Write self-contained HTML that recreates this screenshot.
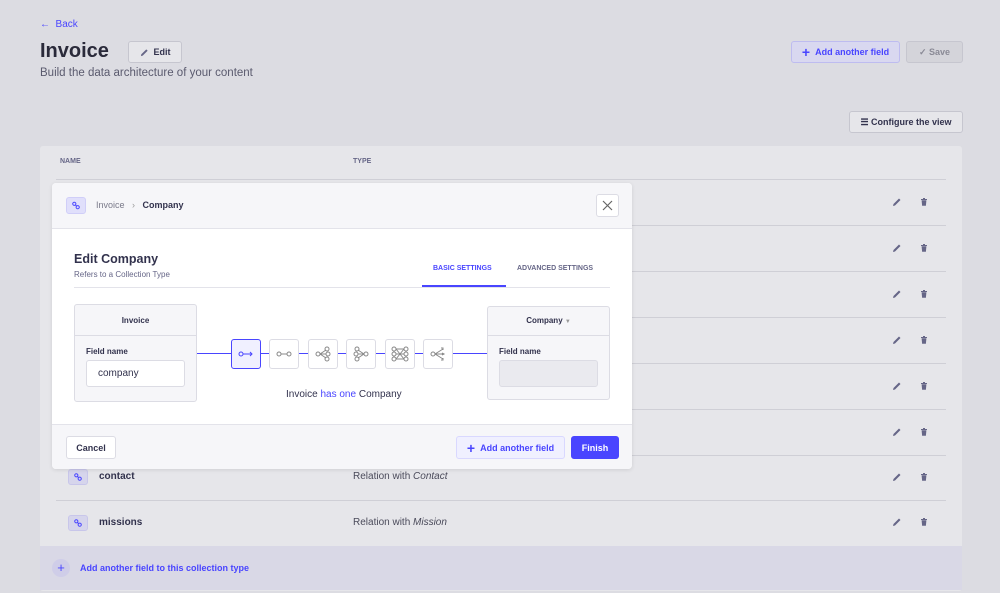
<!DOCTYPE html>
<html><head><style>
*{box-sizing:border-box;margin:0;padding:0}
body{width:1000px;height:593px;overflow:hidden;background:#dcdce2;font-family:"Liberation Sans",sans-serif;color:#32324d;position:relative}
.a{position:absolute}
.btn{position:absolute;border:1px solid #c6c6cf;border-radius:3px;font-size:9px;font-weight:bold;display:flex;align-items:center;justify-content:center;gap:5px}
.row{position:absolute;left:56px;width:890px;height:46px;border-bottom:1px solid #cfcfd6}
.ico{position:absolute;left:12px;width:20px;height:16px;background:#d6d5ec;border:1px solid #c8c6ea;border-radius:3px}
.nm{position:absolute;left:43px;font-size:10px;font-weight:bold}
.ty{position:absolute;left:297px;font-size:10px;color:#4a4a5a}
.ed{position:absolute;left:836px;top:17px}
.tr{position:absolute;left:863px;top:17px}
.rb{position:absolute;width:30px;height:30px;border:1px solid #dcdce4;border-radius:3px;background:#fff;top:339px;display:flex;align-items:center;justify-content:center}
</style></head><body>
<svg width="0" height="0" style="position:absolute"><defs>
<symbol id="pen" viewBox="0 0 10 10"><path d="M1 9 L1.5 7 L7 1.5 L8.5 3 L3 8.5 Z" fill="#666687"/></symbol>
<symbol id="bin" viewBox="0 0 10 10"><path d="M2 2.5h6M4 1.5h2" stroke="#666687" stroke-width="1"/><path d="M2.6 3.3h4.8l-.5 5.5H3.1z" fill="#666687"/></symbol>
<symbol id="lnk" viewBox="0 0 10 10"><circle cx="3.3" cy="3.3" r="1.6" fill="none" stroke="#4945ff" stroke-width="1"/><circle cx="6.7" cy="6.7" r="1.6" fill="none" stroke="#4945ff" stroke-width="1"/><path d="M4.3 4.3l1.4 1.4" stroke="#4945ff"/></symbol>
</defs></svg>
<div class="a" style="left:40px;top:19px;font-size:10px;color:#4945ff">← &nbsp;Back</div>
<div class="a" style="left:40px;top:40px;font-size:20px;font-weight:bold;color:#2a2a3a">Invoice</div>
<div class="btn" style="left:128px;top:41px;width:54px;height:22px;background:#e6e6ea"><svg width="9" height="9"><use href="#pen"/></svg>Edit</div>
<div class="a" style="left:40px;top:67px;font-size:11.5px;color:#5a5a6e">Build the data architecture of your content</div>
<div class="btn" style="left:791px;top:41px;width:109px;height:22px;background:#d9d8f0;border-color:#bebcf0;color:#4945ff"><span style="font-size:14px">+</span>Add another field</div>
<div class="btn" style="left:906px;top:41px;width:57px;height:22px;background:#d4d4da;color:#8a8a96">✓ Save</div>
<div class="btn" style="left:849px;top:111px;width:114px;height:22px;background:#e6e6ea">☰ Configure the view</div>
<div class="a" style="left:40px;top:146px;width:922px;height:445px;background:#e6e6ea;border-radius:3px"></div>
<div class="a" style="left:60px;top:158px;font-size:7px;font-weight:bold;color:#666687">NAME</div>
<div class="a" style="left:353px;top:158px;font-size:7px;font-weight:bold;color:#666687">TYPE</div>
<div class="a" style="left:56px;top:179px;width:890px;height:1px;background:#cfcfd6"></div>
<div class="row" style="top:180px"><svg class="ed" width="10" height="10"><use href="#pen"/></svg><svg class="tr" width="10" height="10"><use href="#bin"/></svg></div>
<div class="row" style="top:226px"><svg class="ed" width="10" height="10"><use href="#pen"/></svg><svg class="tr" width="10" height="10"><use href="#bin"/></svg></div>
<div class="row" style="top:272px"><svg class="ed" width="10" height="10"><use href="#pen"/></svg><svg class="tr" width="10" height="10"><use href="#bin"/></svg></div>
<div class="row" style="top:318px"><svg class="ed" width="10" height="10"><use href="#pen"/></svg><svg class="tr" width="10" height="10"><use href="#bin"/></svg></div>
<div class="row" style="top:364px"><svg class="ed" width="10" height="10"><use href="#pen"/></svg><svg class="tr" width="10" height="10"><use href="#bin"/></svg></div>
<div class="row" style="top:410px"><svg class="ed" width="10" height="10"><use href="#pen"/></svg><svg class="tr" width="10" height="10"><use href="#bin"/></svg></div>
<div class="row" style="top:455px"><div class="ico" style="top:14px"><svg width="18" height="14" viewBox="-4 -2 18 14"><use href="#lnk" width="10" height="10"/></svg></div><span class="nm" style="top:16px">contact</span><span class="ty" style="top:16px">Relation with <i>Contact</i></span><svg class="ed" width="10" height="10"><use href="#pen"/></svg><svg class="tr" width="10" height="10"><use href="#bin"/></svg></div>
<div class="row" style="top:500px;border:none"><div class="ico" style="top:15px"><svg width="18" height="14" viewBox="-4 -2 18 14"><use href="#lnk" width="10" height="10"/></svg></div><span class="nm" style="top:17px">missions</span><span class="ty" style="top:17px">Relation with <i>Mission</i></span><svg class="ed" width="10" height="10"><use href="#pen"/></svg><svg class="tr" width="10" height="10"><use href="#bin"/></svg></div>
<div class="a" style="left:40px;top:546px;width:922px;height:44px;background:#d9d8e6"></div>
<div class="a" style="left:52px;top:559px;width:18px;height:18px;border-radius:50%;background:#cfcde8;color:#4945ff;font-size:13px;text-align:center;line-height:18px">+</div>
<div class="a" style="left:80px;top:563px;font-size:9px;font-weight:bold;color:#4945ff">Add another field to this collection type</div>

<div class="a" style="left:52px;top:183px;width:580px;height:286px;background:#fff;border-radius:4px;box-shadow:0 1px 4px rgba(0,0,0,.1);overflow:hidden">
 <div class="a" style="left:0;top:0;width:580px;height:46px;background:#f6f6f9;border-bottom:1px solid #e3e3ea"></div>
 <div class="a" style="left:14px;top:14px;width:20px;height:17px;background:#e0dffb;border:1px solid #d0cef8;border-radius:3px"><svg width="18" height="15" viewBox="-4 -2.5 18 15"><use href="#lnk" width="10" height="10"/></svg></div>
 <div class="a" style="left:44px;top:17px;font-size:9px;color:#7a7a8a">Invoice &nbsp;&nbsp;<span style="color:#999">›</span>&nbsp;&nbsp; <b style="color:#32324d">Company</b></div>
 <div class="a" style="left:544px;top:11px;width:23px;height:23px;border:1px solid #dcdce4;border-radius:3px;background:#fff"><svg width="21" height="21"><path d="M6 6l9 9M15 6l-9 9" stroke="#666" stroke-width="1.2"/></svg></div>
 <div class="a" style="left:22px;top:69px;font-size:12.5px;font-weight:bold">Edit Company</div>
 <div class="a" style="left:22px;top:87px;font-size:8px;color:#666687">Refers to a Collection Type</div>
 <div class="a" style="left:381px;top:82px;font-size:7px;font-weight:bold;color:#4945ff">BASIC SETTINGS</div>
 <div class="a" style="left:465px;top:82px;font-size:7px;font-weight:bold;color:#666687">ADVANCED SETTINGS</div>
 <div class="a" style="left:22px;top:104px;width:536px;height:1px;background:#e3e3ea"></div>
 <div class="a" style="left:370px;top:102px;width:84px;height:2px;background:#4945ff"></div>
 <div class="a" style="left:145px;top:170px;width:290px;height:1px;background:#4945ff"></div>
 <div class="a" style="left:22px;top:121px;width:123px;height:98px;border:1px solid #dcdce4;border-radius:3px;background:#f6f6f9">
  <div style="height:31px;border-bottom:1px solid #dcdce4;text-align:center;line-height:31px;font-size:8px;font-weight:bold">Invoice</div>
  <div style="font-size:8px;font-weight:bold;margin:11px 0 0 11px">Field name</div>
  <div style="margin:4px 0 0 11px;width:99px;height:27px;border:1px solid #dcdce4;border-radius:3px;background:#fff;font-size:10px;line-height:25px;padding-left:11px">company</div>
 </div>
 <div class="a" style="left:435px;top:123px;width:123px;height:94px;border:1px solid #dcdce4;border-radius:3px;background:#f6f6f9">
  <div style="height:29px;border-bottom:1px solid #dcdce4;text-align:center;line-height:28px;font-size:8px;font-weight:bold">Company <span style="color:#999;font-size:6px">▼</span></div>
  <div style="font-size:8px;font-weight:bold;margin:11px 0 0 11px">Field name</div>
  <div style="margin:4px 0 0 11px;width:99px;height:27px;border:1px solid #dcdce4;border-radius:3px;background:#eaeaef"></div>
 </div>
</div>
<div class="rb" style="left:231px;background:#f0f0ff;border-color:#4945ff"><svg width="16" height="8"><circle cx="3" cy="4" r="2" fill="none" stroke="#4945ff"/><path d="M5 4h9M12 2l2 2-2 2" stroke="#4945ff" fill="none"/></svg></div>
<div class="rb" style="left:269px"><svg width="16" height="8"><circle cx="3" cy="4" r="2" fill="none" stroke="#888"/><circle cx="13" cy="4" r="2" fill="none" stroke="#888"/><path d="M5 4h6" stroke="#888"/></svg></div>
<div class="rb" style="left:308px"><svg width="16" height="16"><circle cx="3" cy="8" r="2" fill="none" stroke="#888"/><circle cx="12" cy="3" r="2" fill="none" stroke="#888"/><circle cx="13" cy="8" r="2" fill="none" stroke="#888"/><circle cx="12" cy="13" r="2" fill="none" stroke="#888"/><path d="M5 8l6-4M5 8h6M5 8l6 4" stroke="#888"/></svg></div>
<div class="rb" style="left:346px"><svg width="16" height="16"><circle cx="13" cy="8" r="2" fill="none" stroke="#888"/><circle cx="4" cy="3" r="2" fill="none" stroke="#888"/><circle cx="3" cy="8" r="2" fill="none" stroke="#888"/><circle cx="4" cy="13" r="2" fill="none" stroke="#888"/><path d="M11 8l-6-4M11 8H5M11 8l-6 4" stroke="#888"/></svg></div>
<div class="rb" style="left:385px"><svg width="18" height="16"><g fill="none" stroke="#888"><circle cx="3" cy="3" r="2"/><circle cx="3" cy="8" r="2"/><circle cx="3" cy="13" r="2"/><circle cx="15" cy="3" r="2"/><circle cx="15" cy="8" r="2"/><circle cx="15" cy="13" r="2"/><path d="M5 3l8 10M5 13l8-10M5 8h8M5 3h8M5 13h8"/></g></svg></div>
<div class="rb" style="left:423px"><svg width="16" height="16"><circle cx="3" cy="8" r="2" fill="none" stroke="#888"/><path d="M5 8l8-5M5 8h9M5 8l8 5M11 2h2v2M12 7l2 1-2 1M11 14h2v-2" stroke="#888" fill="none"/></svg></div>
<div class="a" style="left:286px;top:389px;font-size:10px;color:#32324d">Invoice <span style="color:#4945ff">has one</span> Company</div>
<div class="a" style="left:52px;top:424px;width:580px;height:45px;background:#f6f6f9;border-top:1px solid #e3e3ea;border-radius:0 0 4px 4px"></div>
<div class="btn" style="left:66px;top:436px;width:50px;height:23px;background:#fff;border-color:#dcdce4">Cancel</div>
<div class="btn" style="left:456px;top:436px;width:109px;height:23px;background:#f0f0ff;border-color:#d9d8ff;color:#4945ff"><span style="font-size:14px">+</span>Add another field</div>
<div class="btn" style="left:571px;top:436px;width:48px;height:23px;background:#4945ff;border-color:#4945ff;color:#fff">Finish</div>
</body></html>
